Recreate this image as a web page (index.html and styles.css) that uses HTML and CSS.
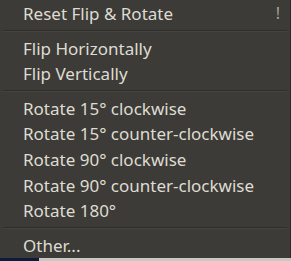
FILE: index.html
```html
<!DOCTYPE html>
<html lang="en">
<head>
    <meta charset="UTF-8" />
    <title>Flip &amp; Rotate</title>
    <link rel="stylesheet" href="styles.css">
</head>
<body>
<div class="menu">
    <div class="item">Reset Flip &amp; Rotate<span class="accel">!</span></div>
    <div class="sep"></div>
    <div class="item">Flip Horizontally</div>
    <div class="item">Flip Vertically</div>
    <div class="sep"></div>
    <div class="item">Rotate 15° clockwise</div>
    <div class="item">Rotate 15° counter-clockwise</div>
    <div class="item">Rotate 90° clockwise</div>
    <div class="item">Rotate 90° counter-clockwise</div>
    <div class="item">Rotate 180°</div>
    <div class="sep"></div>
    <div class="item">Other...</div>
</div>
<div class="below">
    <div class="below-dark"></div>
    <div class="below-light"></div>
</div>
</body>
</html>
```

FILE: styles.css
```css
* {
    margin: 0;
    padding: 0;
    box-sizing: border-box;
}

html, body {
    width: 100%;
    height: 100%;
    overflow: hidden;
    background: #3c3b37;
}

.menu {
    height: 258px;
    background: #3c3b37;
    border-right: 1px solid #2b2a27;
    padding-top: 0.7px;
    font-family: "Noto Sans", sans-serif;
    font-size: 17px;
    color: #dfdbd2;
}

.item {
    display: flex;
    align-items: center;
    height: 25.6px;
    padding: 0 10px 0 23px;
    white-space: nowrap;
}

.accel {
    margin-left: auto;
    color: #a8a59d;
    font-size: 16px;
}

.sep {
    height: 9px;
    margin: 0 3px;
    display: flex;
    flex-direction: column;
    justify-content: center;
}

.sep::before {
    content: "";
    height: 1px;
    background: #2e2d2a;
}

.sep::after {
    content: "";
    height: 1px;
    background: #45443f;
}

.below {
    display: flex;
    height: 3px;
}

.below-dark {
    width: 39px;
    background: #0b1d3b;
}

.below-light {
    flex: 1;
    background: #c9c8c3;
}
```
